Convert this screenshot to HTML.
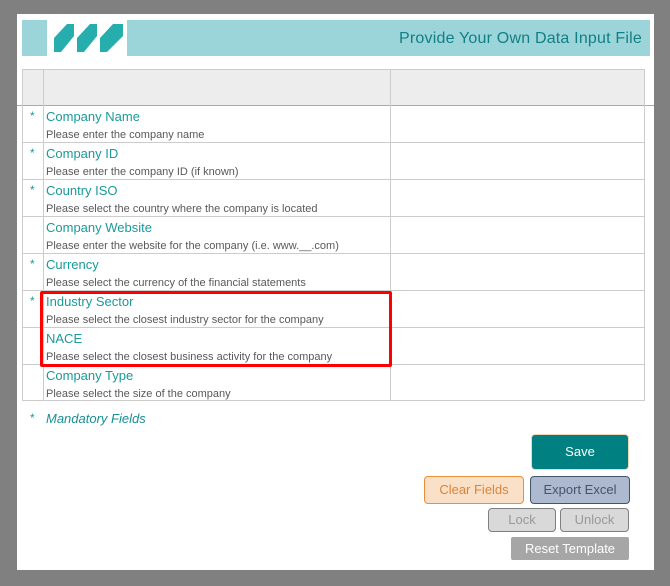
<!DOCTYPE html>
<html><head><style>
body{margin:0;width:670px;height:586px;background:#808080;position:relative;overflow:hidden;font-family:"Liberation Sans",sans-serif}
.a{position:absolute}
.panel{left:17px;top:14px;width:637px;height:556px;background:#fff}
.t{color:#1a9a9a;font-size:13px;left:46px}
.d{color:#595959;font-size:11px;left:46px}
.s{color:#1a9a9a;font-size:12px;left:30px}
.h{background:#ccc}
.btn{position:absolute;box-sizing:border-box;border-radius:4px;text-align:center;font-size:13px}
</style></head><body>
<div class="a panel"></div>
<div class="a" style="left:22px;top:20px;width:25px;height:36px;background:#9bd5d9"></div>
<svg class="a" style="left:50px;top:20px" width="76" height="36" viewBox="0 0 76 36">
<g fill="#26aeae">
<polygon points="4,18 17,4 24,4 24,16 11,32 4,32"/>
<polygon points="27,18 40,4 47,4 47,16 34,32 27,32"/>
<polygon points="50,18 63,4 73,4 73,16 57,32 50,32"/>
</g></svg>
<div class="a" style="left:127px;top:20px;width:523px;height:36px;background:#9bd5d9"></div>
<div class="a" style="right:28px;top:30px;color:#127f85;font-size:16px;letter-spacing:0.2px">Provide Your Own Data Input File</div>
<div class="a" style="left:22px;top:69px;width:623px;height:36px;background:#ededed"></div>
<div class="a h" style="left:22px;top:69px;width:623px;height:1px"></div>
<div class="a" style="left:17px;top:105px;width:637px;height:1px;background:#aaa"></div>
<div class="a h" style="left:22px;top:142px;width:623px;height:1px"></div>
<div class="a h" style="left:22px;top:179px;width:623px;height:1px"></div>
<div class="a h" style="left:22px;top:216px;width:623px;height:1px"></div>
<div class="a h" style="left:22px;top:253px;width:623px;height:1px"></div>
<div class="a h" style="left:22px;top:290px;width:623px;height:1px"></div>
<div class="a h" style="left:22px;top:327px;width:623px;height:1px"></div>
<div class="a h" style="left:22px;top:364px;width:623px;height:1px"></div>
<div class="a h" style="left:22px;top:400px;width:623px;height:1px"></div>
<div class="a h" style="left:22px;top:69px;width:1px;height:332px"></div>
<div class="a h" style="left:43px;top:69px;width:1px;height:332px"></div>
<div class="a h" style="left:390px;top:69px;width:1px;height:332px"></div>
<div class="a h" style="left:644px;top:69px;width:1px;height:332px"></div>

<div class="a s" style="top:109px">*</div><div class="a t" style="top:109px">Company Name</div><div class="a d" style="top:129px">Please enter the company name</div>
<div class="a s" style="top:146px">*</div><div class="a t" style="top:146px">Company ID</div><div class="a d" style="top:166px">Please enter the company ID (if known)</div>
<div class="a s" style="top:183px">*</div><div class="a t" style="top:183px">Country ISO</div><div class="a d" style="top:203px">Please select the country where the company is located</div>
<div class="a t" style="top:220px">Company Website</div><div class="a d" style="top:240px">Please enter the website for the company (i.e. www.__.com)</div>
<div class="a s" style="top:257px">*</div><div class="a t" style="top:257px">Currency</div><div class="a d" style="top:277px">Please select the currency of the financial statements</div>
<div class="a s" style="top:294px">*</div><div class="a t" style="top:294px">Industry Sector</div><div class="a d" style="top:314px">Please select the closest industry sector for the company</div>
<div class="a t" style="top:331px">NACE</div><div class="a d" style="top:351px">Please select the closest business activity for the company</div>
<div class="a t" style="top:368px">Company Type</div><div class="a d" style="top:388px">Please select the size of the company</div>
<div class="a" style="left:40px;top:291px;width:346px;height:70px;border:3px solid #f00;border-radius:2px"></div>

<div class="a s" style="top:411px">*</div>
<div class="a" style="left:46px;top:411px;color:#1a8f94;font-size:13px;font-style:italic">Mandatory Fields</div>

<div class="btn" style="left:531px;top:434px;width:98px;height:36px;background:#008080;border:1px solid #f3d6b6;color:#fff;line-height:34px">Save</div>
<div class="btn" style="left:424px;top:476px;width:100px;height:28px;background:#fbe0c8;border:1px solid #e8903a;color:#d9843a;line-height:26px">Clear Fields</div>
<div class="btn" style="left:530px;top:476px;width:100px;height:28px;background:#adb9cf;border:1px solid #44546a;color:#44546a;line-height:26px">Export Excel</div>
<div class="btn" style="left:488px;top:508px;width:68px;height:24px;background:#d9d9d9;border:1px solid #7f7f7f;color:#999;line-height:22px">Lock</div>
<div class="btn" style="left:560px;top:508px;width:69px;height:24px;background:#d9d9d9;border:1px solid #7f7f7f;color:#999;line-height:22px">Unlock</div>
<div class="btn" style="left:511px;top:537px;width:118px;height:23px;background:#a6a6a6;color:#fff;line-height:23px;border-radius:2px">Reset Template</div>
</body></html>
